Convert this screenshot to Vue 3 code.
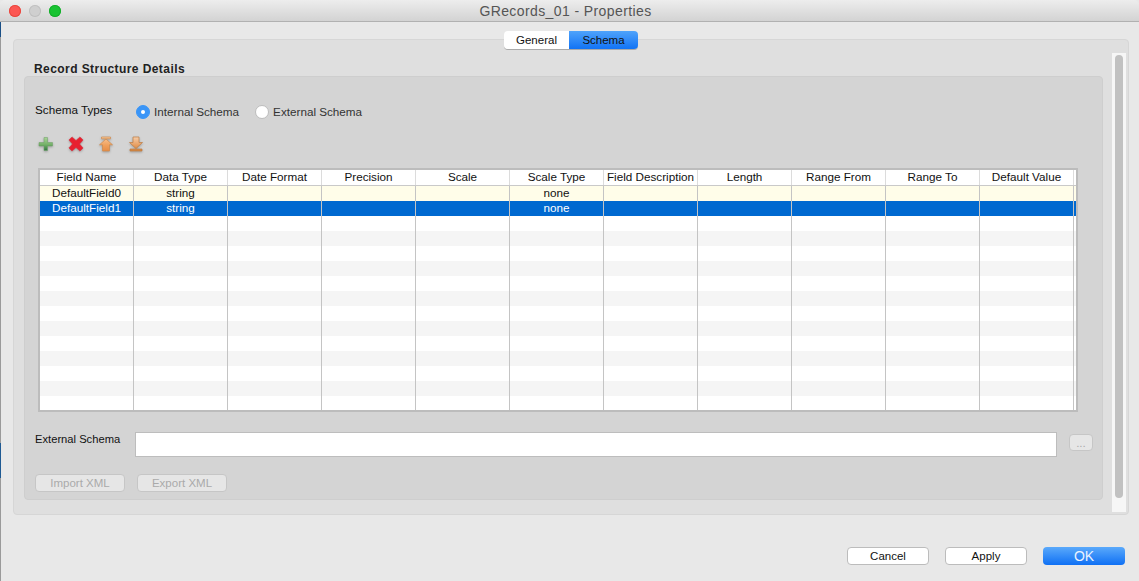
<template>
  <div class="window">
    <div class="desktop-edge"></div>
    <header class="titlebar">
      <div class="lights">
        <span class="light red"></span>
        <span class="light grey"></span>
        <span class="light green"></span>
      </div>
      <span class="title">GRecords_01 - Properties</span>
    </header>

    <div class="content">
      <div class="tabs">
        <span class="tab">General</span>
        <span class="tab active">Schema</span>
      </div>

      <section class="tabpanel">
        <div class="scroll-area">
          <h2 class="heading">Record Structure Details</h2>
          <div class="group">
            <div class="schema-types">
              <span class="label">Schema Types</span>
              <label class="radio"><i class="dot on"></i>Internal Schema</label>
              <label class="radio"><i class="dot"></i>External Schema</label>
            </div>

            <div class="toolbar">
              <svg width="16" height="16" viewBox="0 0 16 16">
                <defs>
                  <linearGradient id="gPlus" x1="0" y1="0" x2="0" y2="1">
                    <stop offset="0" stop-color="#a8d596" />
                    <stop offset="0.55" stop-color="#74b068" />
                    <stop offset="1" stop-color="#2f7540" />
                  </linearGradient>
                </defs>
                <path d="M6 1.500h3.500v5h5V10h-5v4.500H6V10H1V6.500h5z" fill="url(#gPlus)" stroke="#6d9e66" stroke-width="0.5" />
              </svg>
              <svg width="16" height="16" viewBox="0 0 18 18">
                <path d="M4.500 1 9 5l4.500-4 3.500 3.500-4 4.500 4 4.500-3.500 3.500L9 13l-4.500 4L1 13.500 5 9 1 4.500z" fill="#e8202f" stroke="#cf2a38" stroke-width="0.6" />
              </svg>
              <svg width="16" height="16" viewBox="0 0 16 16">
                <defs>
                  <linearGradient id="gUp" x1="0" y1="0" x2="0" y2="1">
                    <stop offset="0" stop-color="#f8c89a" />
                    <stop offset="0.6" stop-color="#f0a05c" />
                    <stop offset="1" stop-color="#e58d48" />
                  </linearGradient>
                </defs>
                <path d="M3.500 1h9v1.800h-9zM8 3l6.500 5.800h-3V15h-7V8.800h-3z" fill="url(#gUp)" stroke="#cf894c" stroke-width="0.7" />
              </svg>
              <svg width="16" height="16" viewBox="0 0 16 16">
                <defs>
                  <linearGradient id="gDown" x1="0" y1="0" x2="0" y2="1">
                    <stop offset="0" stop-color="#f5cdaa" />
                    <stop offset="0.6" stop-color="#e79d5f" />
                    <stop offset="1" stop-color="#d28440" />
                  </linearGradient>
                </defs>
                <path d="M5 1h6v5.500h3.500L8 12.500 1.500 6.500H5zM2 13h12v2H2z" fill="url(#gDown)" stroke="#bf7b40" stroke-width="0.7" />
              </svg>
            </div>

            <div class="table">
              <div class="row head">
                <span v-for="c in columns" :key="c" class="cell">{{ c }}</span>
                <span class="cell rest"></span>
              </div>
              <div
                v-for="(r, i) in rows"
                :key="i"
                class="row"
                :class="{ first: i === 0, selected: i === 1, striped: i > 1 && i % 2 === 1 }"
              >
                <span v-for="(c, j) in columns" :key="c" class="cell">{{ r[j] }}</span>
                <span class="cell rest"></span>
              </div>
            </div>

            <div class="external">
              <span class="label">External Schema</span>
              <div class="input"></div>
              <span class="btn small disabled">...</span>
            </div>

            <div class="xml-btns">
              <span class="btn xml disabled">Import XML</span>
              <span class="btn xml disabled">Export XML</span>
            </div>
          </div>
        </div>
        <div class="scrollbar"><div class="thumb"></div></div>
      </section>
    </div>

    <footer class="footer">
      <span class="btn action">Cancel</span>
      <span class="btn action">Apply</span>
      <span class="btn action primary">OK</span>
    </footer>
  </div>
</template>

<script setup>
const columns = [
  'Field Name',
  'Data Type',
  'Date Format',
  'Precision',
  'Scale',
  'Scale Type',
  'Field Description',
  'Length',
  'Range From',
  'Range To',
  'Default Value',
]

const rows = []
for (let i = 0; i < 15; i++) {
  if (i < 2) {
    rows.push(['DefaultField' + i, 'string', '', '', '', 'none', '', '', '', '', ''])
  } else {
    rows.push(columns.map(() => ''))
  }
}
</script>

<style>
html,
body {
  margin: 0;
  overflow: hidden;
}
</style>

<style scoped>
.window {
  position: relative;
  width: 1139px;
  height: 581px;
  display: flex;
  flex-direction: column;
  background: #e8e8e8;
  font-family: "Liberation Sans", Arial, sans-serif;
  font-size: 11.7px;
  color: #111;
  overflow: hidden;
}

.desktop-edge {
  position: absolute;
  left: 0;
  top: 8px;
  bottom: 0;
  width: 1px;
  background: linear-gradient(#1a4f86 0 5%, #9a9a9a 5% 76%, #1f5a93 76% 82%, #9a9a9a 82%);
}

.titlebar {
  flex: none;
  display: flex;
  align-items: center;
  justify-content: center;
  position: relative;
  padding-top: 1px;
  box-sizing: border-box;
  height: 22px;
  background: linear-gradient(#ededed, #d3d3d3);
  border-bottom: 1px solid #b1b1b1;
  border-radius: 5px 5px 0 0;
}

.lights {
  position: absolute;
  left: 9px;
  top: 5px;
  display: flex;
  gap: 8px;
}

.light {
  width: 12px;
  height: 12px;
  border-radius: 50%;
}

.light.red { background: #fc5753; box-shadow: inset 0 0 0 1px #e8483f; }
.light.grey { background: #cfcfcf; box-shadow: inset 0 0 0 1px #c0c0c0; }
.light.green { background: #19c332; box-shadow: inset 0 0 0 1px #14ae2a; }

.title {
  font-size: 14px;
  color: #555;
  letter-spacing: 0.4px;
  margin-right: 8px;
}

.content {
  position: relative;
  height: 494px;
  flex: none;
  padding: 17px 10px 0 13px;
  box-sizing: border-box;
}

.tabs {
  position: absolute;
  left: 504px;
  top: 9px;
  z-index: 1;
  display: flex;
  width: 134px;
  height: 18px;
  box-sizing: border-box;
  border-radius: 4px;
  overflow: hidden;
  box-shadow: 0 1px 0 #aaa;
}

.tab {
  flex: 0 0 65px;
  display: flex;
  align-items: center;
  justify-content: center;
  background: #fff;
  font-size: 11.5px;
}

.tab.active {
  flex: 1;
  background: linear-gradient(#4fa3fb, #1173f5);
}

.tabpanel {
  height: 476px;
  box-sizing: border-box;
  display: flex;
  background: #dfdfdf;
  border: 1px solid #d6d6d6;
  border-radius: 4px;
  padding: 12px 2px 1px 10px;
}

.scroll-area {
  width: 1079px;
  flex: none;
}

.heading {
  margin: 11px 0 0 10px;
  font-size: 12px;
  line-height: 13px;
  font-weight: bold;
  color: #222;
  letter-spacing: 0.43px;
}

.group {
  height: 424px;
  box-sizing: border-box;
  background: #d4d4d4;
  border: 1px solid #cecece;
  border-radius: 4px;
  padding: 26px 0 0 10px;
}

.schema-types {
  display: flex;
  align-items: center;
  height: 16px;
}

.label {
  width: 101px;
  flex: none;
  position: relative;
  top: -2px;
}

.radio {
  display: flex;
  align-items: center;
  gap: 4px;
  margin-right: 16px;
  color: #333;
}

.dot {
  position: relative;
  top: 1px;
  width: 14px;
  height: 14px;
  box-sizing: border-box;
  border-radius: 50%;
  background: #fff;
  border: 1px solid #bdbdbd;
  display: flex;
  align-items: center;
  justify-content: center;
}

.dot.on {
  background: #3a95f7;
  border-color: #3a95f7;
}

.dot.on::after {
  content: "";
  width: 4px;
  height: 4px;
  border-radius: 50%;
  background: #fff;
}

.toolbar {
  display: flex;
  align-items: center;
  margin: 16px 0 0 3px;
  height: 18px;
  gap: 14px;
}

.toolbar svg {
  filter: drop-shadow(0 1px 1px rgba(0, 0, 0, 0.25));
}

.table {
  margin: 15px 0 0 3px;
  width: 1040px;
  height: 244px;
  box-sizing: border-box;
  border: 2px solid #bcbcbc;
  background: #fff;
  overflow: hidden;
}

.row {
  display: flex;
  height: 15px;
  line-height: 14px;
  text-align: center;
}

.cell {
  flex: 0 0 94px;
  box-sizing: border-box;
  border-right: 1px solid #c4c4c4;
  white-space: nowrap;
  overflow: hidden;
}

.cell.rest {
  flex: 1;
  border-right: 0;
}

.row.head {
  height: 16px;
  line-height: 14px;
  border-bottom: 1px solid #c9c9c9;
  box-sizing: border-box;
}

.row.head .cell {
  border-right-color: #dcdcdc;
}

.row.first { background: #fffde9; }
.row.selected { background: #0069d0; color: #fff; }
.row.striped { background: #f5f5f5; }

.external {
  display: flex;
  align-items: center;
  margin-top: 20px;
  height: 25px;
}

.external .label {
  width: 100px;
  top: -6px;
  font-size: 11.2px;
}

.input {
  width: 922px;
  height: 25px;
  box-sizing: border-box;
  background: #fff;
  border: 1px solid #bdbdbd;
}

.btn {
  display: flex;
  align-items: center;
  justify-content: center;
  box-sizing: border-box;
  border-radius: 4px;
}

.btn.disabled {
  background: #e6e6e6;
  border: 1px solid #c6c6c6;
  color: #aaa;
}

.btn.small {
  width: 24px;
  height: 17px;
  margin-left: 12px;
  position: relative;
  top: -2px;
}

.xml-btns {
  display: flex;
  gap: 12px;
  margin-top: 17px;
}

.btn.xml {
  width: 90px;
  height: 18px;
  font-size: 11.5px;
}

.scrollbar {
  flex: none;
  width: 14px;
  height: 459px;
  margin: 1px 0 0 9px;
  background: #f6f6f6;
  box-sizing: border-box;
  padding: 2px 3px;
}

.thumb {
  width: 8px;
  height: 443px;
  background: #c1c1c1;
  border-radius: 4px;
}

.footer {
  flex: 1;
  display: flex;
  justify-content: flex-end;
  gap: 16px;
  padding: 31px 14px 0 0;
}

.btn.action {
  width: 82px;
  height: 18px;
  background: #fff;
  border: 1px solid #bcbcbc;
  font-size: 11.5px;
}

.btn.primary {
  background: linear-gradient(#5aa9fb, #0f70f4);
  border: 0;
  color: #eaf3ff;
  font-size: 14px;
}
</style>
